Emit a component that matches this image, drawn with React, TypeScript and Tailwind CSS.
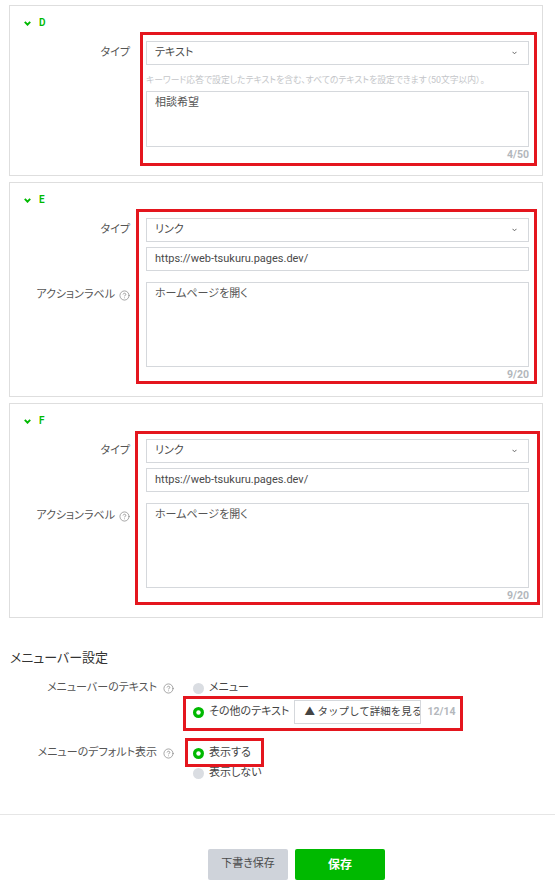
import React from "react";
import { CircleHelp } from "lucide-react";

function GreenChevron() {
  return (
    <svg width="7" height="5" viewBox="0 0 7 5" className="block">
      <path d="M0.8 0.9 L3.5 3.7 L6.2 0.9" fill="none" stroke="#00b900" strokeWidth="1.9" />
    </svg>
  );
}

function SelectChevron() {
  return (
    <svg width="5" height="4" viewBox="0 0 5 4" className="block">
      <path d="M0.5 0.8 L2.5 2.8 L4.5 0.8" fill="none" stroke="#666" strokeWidth="1" />
    </svg>
  );
}

function Help() {
  return <CircleHelp size={11} strokeWidth={1.5} color="#808080" className="shrink-0" />;
}

function RadioDot({ checked }: { checked: boolean }) {
  return (
    <svg width="11" height="11" viewBox="0 0 11 11" className="block shrink-0">
      {checked ? (
        <>
          <circle cx="5.5" cy="5.5" r="5.5" fill="#00b900" />
          <circle cx="5.5" cy="5.5" r="2.2" fill="#fff" />
        </>
      ) : (
        <circle cx="5.5" cy="5.5" r="5.5" fill="#dadde2" />
      )}
    </svg>
  );
}

function Header({ letter }: { letter: string }) {
  return (
    <div className="flex h-4 items-center pl-[14px]">
      <GreenChevron />
      <span className="ml-[8px] text-[10px] font-semibold leading-4 text-[#00b900]">{letter}</span>
    </div>
  );
}

function Select({ value }: { value: string }) {
  return (
    <div className="flex h-6 items-center justify-between border border-[#d5d8dc] bg-white pl-[8px] pr-[11px] text-[11px] text-[#4a4a4a]">
      <span>{value}</span>
      <SelectChevron />
    </div>
  );
}

function Counter({ text }: { text: string }) {
  return <div className="h-4 text-right text-[10.5px] font-bold leading-4 text-[#b3b7bc]">{text}</div>;
}

function LinkCard({ letter, red }: { letter: string; red: string }) {
  return (
    <div className="relative ml-[9px] mt-[6px] w-[534px] border border-[#dedede] bg-white pt-[9px] pr-[13px] pb-[13px]">
      <Header letter={letter} />
      <div className="mt-[10px] flex">
        <div className="flex h-6 w-[120px] items-center justify-end text-[11px] text-[#555]">タイプ</div>
        <div className="ml-4 w-[383px]">
          <Select value="リンク" />
          <div className="mt-[5px] flex h-6 items-center border border-[#d5d8dc] bg-white pl-[8px] text-[11px] text-[#4a4a4a]">
            https://web-tsukuru.pages.dev/
          </div>
        </div>
      </div>
      <div className="mt-[11px] flex">
        <div className="w-[120px] pt-[5px]">
          <div className="flex h-4 items-center justify-end gap-[4px] text-[11px] text-[#555]">
            <span>アクションラベル</span>
            <Help />
          </div>
        </div>
        <div className="ml-4 w-[383px]">
          <div className="h-[85px] border border-[#d5d8dc] bg-white pt-[3px] pl-[8px] text-[11px] leading-4 text-[#555]">
            ホームページを開く
          </div>
          <Counter text="9/20" />
        </div>
      </div>
      <div className={red} />
    </div>
  );
}

export default function App() {
  return (
    <div className="min-h-[892px] w-[555px] bg-white pt-[5px] pb-[12px] font-['Roboto','Noto_Sans_CJK_JP',sans-serif] text-[#444] [font-feature-settings:'palt']">
      {/* Card D */}
      <div className="relative ml-[9px] w-[534px] border border-[#dedede] bg-white pt-[9px] pr-[13px] pb-[12px]">
        <Header letter="D" />
        <div className="mt-[10px] flex">
          <div className="flex h-6 w-[120px] items-center justify-end text-[11px] text-[#555]">タイプ</div>
          <div className="ml-4 w-[383px]">
            <Select value="テキスト" />
            <div className="whitespace-nowrap pt-[8px] pb-[4px] text-[8.8px] leading-[14px] text-[#c4c6c9]">
              キーワード応答で設定したテキストを含む、すべてのテキストを設定できます（50文字以内）。
            </div>
            <div className="h-[56px] border border-[#d5d8dc] bg-white pt-[3px] pl-[8px] text-[11px] leading-4 text-[#555]">
              相談希望
            </div>
            <Counter text="4/50" />
          </div>
        </div>
        <div className="pointer-events-none absolute left-[130px] top-[26px] h-[134px] w-[397px] border-[3px] border-[#e4161e]" />
      </div>

      <LinkCard
        letter="E"
        red="pointer-events-none absolute left-[126px] top-[26px] h-[175px] w-[401px] border-[3px] border-[#e4161e]"
      />
      <LinkCard
        letter="F"
        red="pointer-events-none absolute left-[125px] top-[27px] h-[174px] w-[405px] border-[3px] border-[#e4161e]"
      />

      {/* Menu bar settings */}
      <div className="mt-[30px] pl-[10px]">
        <div className="text-[13px] leading-5 text-[#333]">メニューバー設定</div>

        <div className="mt-[10px] flex">
          <div className="flex h-5 w-[164px] items-center justify-end gap-[6px] text-[11px] text-[#555]">
            <span>メニューバーのテキスト</span>
            <Help />
          </div>
          <div className="ml-[19px]">
            <div className="flex h-5 items-center text-[11px] text-[#444]">
              <RadioDot checked={false} />
              <span className="ml-[5px]">メニュー</span>
            </div>
            <div className="relative mt-[2px] flex h-6 items-center text-[11px] text-[#444]">
              <RadioDot checked={true} />
              <span className="ml-[5px]">その他のテキスト</span>
              <div className="ml-[5px] flex h-6 w-[127px] items-center overflow-hidden whitespace-nowrap border border-[#d5d8dc] bg-white pl-[9px] text-[10.5px] text-[#444] [font-feature-settings:normal]">
                ▲ タップして詳細を見る
              </div>
              <span className="ml-[6px] text-[10.5px] font-bold text-[#b3b7bc]">12/14</span>
              <div className="pointer-events-none absolute left-[-10px] top-[-4px] h-[35px] w-[280px] border-[3px] border-[#e4161e]" />
            </div>
          </div>
        </div>

        <div className="mt-[19px] flex">
          <div className="flex h-5 w-[164px] items-center justify-end gap-[6px] text-[11px] text-[#555]">
            <span>メニューのデフォルト表示</span>
            <Help />
          </div>
          <div className="ml-[19px]">
            <div className="relative flex h-5 items-center text-[11px] text-[#444]">
              <RadioDot checked={true} />
              <span className="ml-[5px]">表示する</span>
              <div className="pointer-events-none absolute left-[-8px] top-[-5px] h-[29px] w-[79px] border-[3px] border-[#e4161e]" />
            </div>
            <div className="flex h-5 items-center text-[11px] text-[#444]">
              <RadioDot checked={false} />
              <span className="ml-[5px]">表示しない</span>
            </div>
          </div>
        </div>
      </div>

      <div className="mt-[31px] border-t border-[#e6e6e6]" />

      <div className="mt-[34px] flex gap-[7px] pl-[208px]">
        <div className="flex h-[31px] w-[80px] items-center justify-center rounded-[2px] bg-[#cfd3da] text-[11px] text-[#4a4a4a]">
          下書き保存
        </div>
        <div className="flex h-[31px] w-[90px] items-center justify-center rounded-[2px] bg-[#00b900] text-[12px] font-bold text-white">
          保存
        </div>
      </div>
    </div>
  );
}
